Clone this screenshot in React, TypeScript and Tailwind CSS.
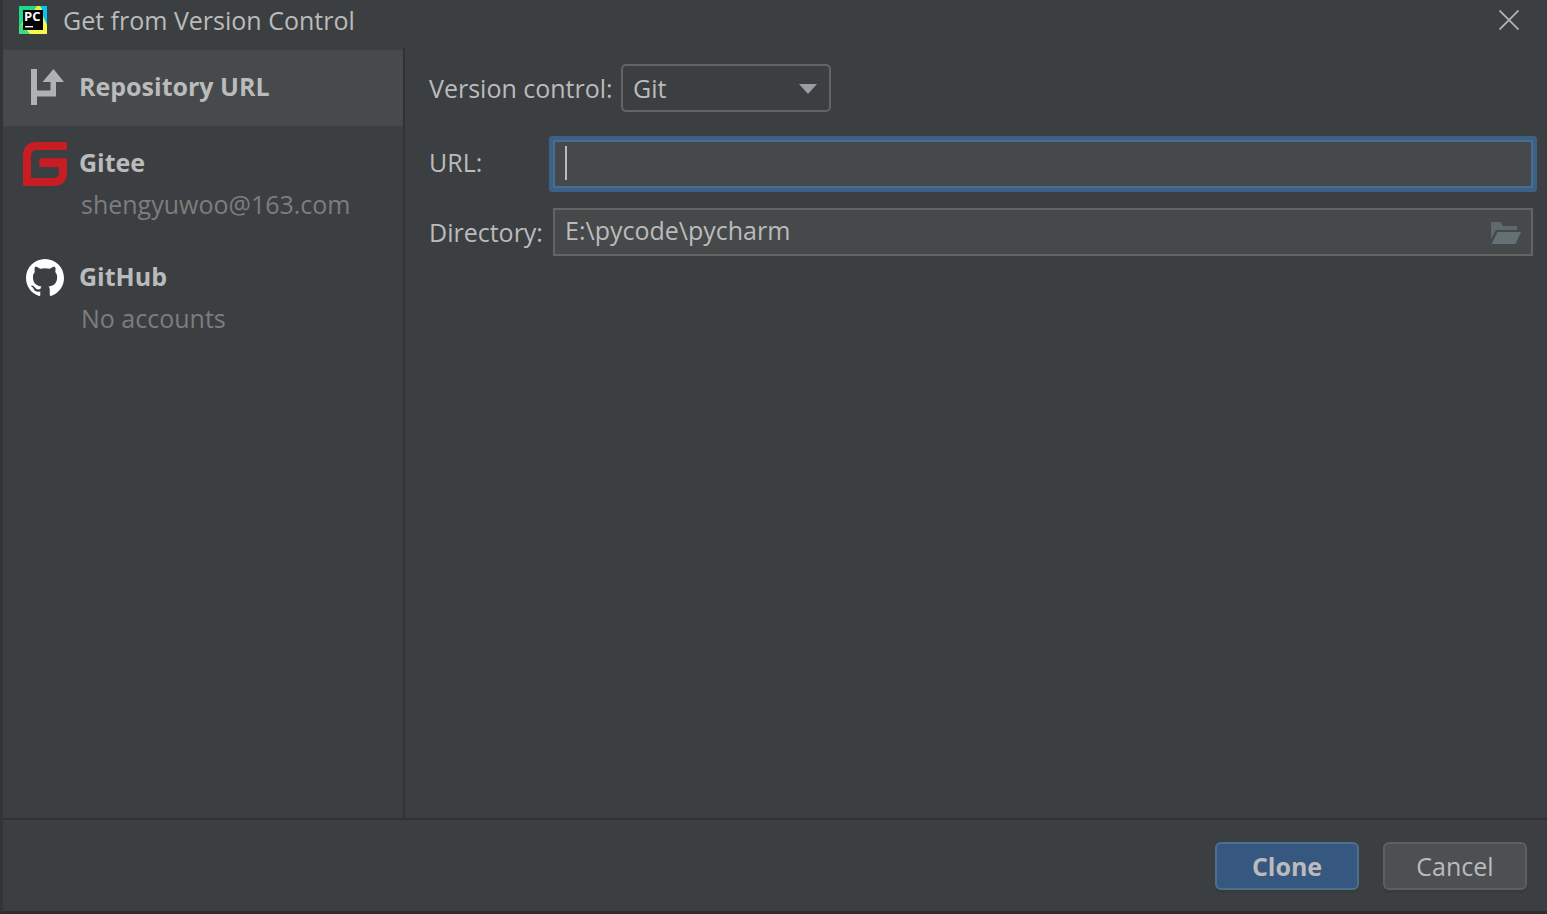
import React, { useState } from "react";

function PyCharmLogo() {
  return (
    <span className="relative block size-7 shrink-0">
      <svg viewBox="0 0 28 28" className="block size-7" aria-hidden="true">
        <rect width="28" height="28" fill="#21d789" />
        <path d="M19 0h9v21l-6-9z" fill="#07c3f2" />
        <path d="M14 6L18 0h3l3 5v5z" fill="#e6f04a" />
        <path d="M0 22L4 16l20-6 4 9v9H9z" fill="#fcf84a" />
        <path d="M0 22l3-4 8 10H0z" fill="#3edc7d" />
        <rect x="4" y="4" width="20" height="20" fill="#000" />
        <rect x="6" y="20" width="8" height="1.400" fill="#fff" />
      </svg>
      <span className="absolute top-1 left-[5px] text-[13px] leading-3 font-bold text-white">PC</span>
    </span>
  );
}

function RepositoryIcon() {
  return (
    <svg viewBox="0 0 44 44" className="block size-11" aria-hidden="true">
      <g fill="#afb1b3">
        <path d="M8 3h6v36H8z" />
        <path d="M14 24.500h13.500V16H19.500L30.500 3L41 16H33v14.500H14z" />
      </g>
    </svg>
  );
}

function GiteeIcon() {
  return (
    <svg viewBox="0 0 44 44" className="block size-11" aria-hidden="true">
      <path
        fill="#c71d23"
        d="M14 0H42.500Q44 0 44 1.500V6.500Q44 8 42.500 8H14Q8 8 8 14V34.500Q8 36 9.500 36H30Q36 36 36 30V26.500Q36 25 34.500 25H18Q16.300 25 16.300 23.500V18Q16.300 16.300 18 16.300H42.500Q44 16.300 44 18V30Q44 44 30 44H1.500Q0 44 0 42.500V14Q0 0 14 0Z"
      />
    </svg>
  );
}

function GitHubIcon() {
  return (
    <svg viewBox="0 0 16 16" className="block size-[38px]" aria-hidden="true">
      <path
        fill="#fff"
        d="M8 0C3.580 0 0 3.580 0 8c0 3.540 2.290 6.530 5.470 7.590.4.070.55-.17.55-.38 0-.19-.01-.82-.01-1.490-2.010.37-2.530-.49-2.690-.94-.09-.23-.48-.94-.82-1.130-.28-.15-.68-.52-.01-.53.63-.01 1.080.58 1.230.82.72 1.210 1.870.87 2.330.66.070-.52.28-.87.51-1.070-1.780-.2-3.640-.89-3.640-3.950 0-.87.31-1.590.82-2.150-.08-.2-.36-1.020.08-2.120 0 0 .67-.21 2.200.82.64-.18 1.320-.27 2-.27s1.360.09 2 .27c1.530-1.040 2.200-.82 2.200-.82.44 1.100.16 1.920.08 2.120.51.56.82 1.270.82 2.150 0 3.070-1.870 3.750-3.650 3.950.29.25.54.73.54 1.480 0 1.070-.01 1.930-.01 2.200 0 .21.15.46.55.38A8.010 8.010 0 0 0 16 8c0-4.420-3.580-8-8-8z"
      />
    </svg>
  );
}

type Source = { name: string; detail?: string; icon: React.ReactNode };

const sources: Source[] = [
  { name: "Repository URL", icon: <RepositoryIcon /> },
  { name: "Gitee", detail: "shengyuwoo@163.com", icon: <GiteeIcon /> },
  { name: "GitHub", detail: "No accounts", icon: <GitHubIcon /> },
];

function Sidebar() {
  const [active, setActive] = useState("Repository URL");
  return (
    <nav className="w-[402px] shrink-0 border-r-2 border-[#323232] pt-0.5">
      {sources.map((source) => (
        <button
          key={source.name}
          type="button"
          onClick={() => setActive(source.name)}
          className={`block w-full py-4 pl-5 text-left ${active === source.name ? "bg-[#464a4c]" : ""}`}
        >
          <span className="flex h-11 items-center gap-3">
            <span className="flex w-11 shrink-0 justify-center">{source.icon}</span>
            <span className="pb-1 font-bold">{source.name}</span>
          </span>
          {source.detail && (
            <span className="block pb-0.5 pl-[58px] leading-9 text-[#7d7d7d]">{source.detail}</span>
          )}
        </button>
      ))}
    </nav>
  );
}

function CloneForm() {
  const [url, setUrl] = useState("");
  const [directory, setDirectory] = useState("E:\\pycode\\pycharm");
  return (
    <form className="min-w-0 flex-1 pt-4 pr-3.5 pl-6">
      <div className="flex items-center">
        <label htmlFor="vcs" className="w-48">
          Version control:
        </label>
        <div className="relative">
          <select
            id="vcs"
            className="block h-12 w-[210px] appearance-none rounded-[5px] border-2 border-[#646464] bg-[#3c3f41] pr-10 pl-2.5"
          >
            <option>Git</option>
            <option>Mercurial</option>
          </select>
          <svg
            viewBox="0 0 18 10"
            className="pointer-events-none absolute top-5 right-3.5 h-2.5 w-[18px]"
            aria-hidden="true"
          >
            <path d="M0 0h18L9 10z" fill="#9a9da1" />
          </svg>
        </div>
      </div>

      <div className="mt-7 flex items-center">
        <label htmlFor="url" className="w-[124px] shrink-0 pb-1">
          URL:
        </label>
        <div className="relative flex-1 rounded-[1px] ring-4 ring-[#3d6185]">
          <input
            id="url"
            type="text"
            value={url}
            onChange={(e) => setUrl(e.target.value)}
            className="peer block h-12 w-full border-2 border-[#466d94] bg-[#45494a] px-2.5 outline-none"
          />
          {url === "" && (
            <span className="pointer-events-none absolute top-1.5 left-3 h-[34px] w-0.5 bg-[#bbbbbb] peer-focus:hidden" />
          )}
        </div>
      </div>

      <div className="mt-5 flex items-center">
        <label htmlFor="directory" className="w-[124px] shrink-0">
          Directory:
        </label>
        <div className="relative flex-1">
          <input
            id="directory"
            type="text"
            value={directory}
            onChange={(e) => setDirectory(e.target.value)}
            className="block h-12 w-full border-2 border-[#646464] bg-[#45494a] pr-14 pb-1 pl-2.5 outline-none"
          />
          <button type="button" aria-label="Browse" className="absolute top-3.5 right-3">
            <svg viewBox="0 0 30 22" className="block h-[22px] w-[30px]" aria-hidden="true">
              <path d="M0 0h9.500l2.500 4h14v4H5L0 17z" fill="#5f686c" />
              <path d="M6.500 10H30l-5.500 12H.5z" fill="#657074" />
            </svg>
          </button>
        </div>
      </div>
    </form>
  );
}

export default function App() {
  return (
    <div className="flex min-h-screen flex-col border-b-[3px] border-l-[3px] border-b-[#2d2d30] border-l-[#323435] bg-[#3c3f41] font-['Open_Sans',sans-serif] text-[25px] leading-8 text-[#bbbbbb]">
      <header className="flex h-12 items-center gap-4 pr-7 pb-2 pl-4">
        <PyCharmLogo />
        <h1 className="flex-1">Get from Version Control</h1>
        <button type="button" aria-label="Close">
          <svg viewBox="0 0 20 20" className="block size-5" aria-hidden="true">
            <path d="M.5.500l19 19M19.500.500l-19 19" stroke="#b4b4b4" strokeWidth="1.700" />
          </svg>
        </button>
      </header>
      <div className="flex flex-1">
        <Sidebar />
        <CloneForm />
      </div>
      <footer className="flex justify-end gap-6 border-t-2 border-[#323232] pt-[22px] pr-5 pb-[21px]">
        <button
          type="button"
          className="h-12 w-36 rounded-[6px] border-2 border-[#4c708c] bg-[#365880] font-bold shadow-[0_3px_0_#383a3c]"
        >
          Clone
        </button>
        <button
          type="button"
          className="h-12 w-36 rounded-[6px] border-2 border-[#5e6060] bg-[#4c5052] shadow-[0_3px_0_#383a3c]"
        >
          Cancel
        </button>
      </footer>
    </div>
  );
}
